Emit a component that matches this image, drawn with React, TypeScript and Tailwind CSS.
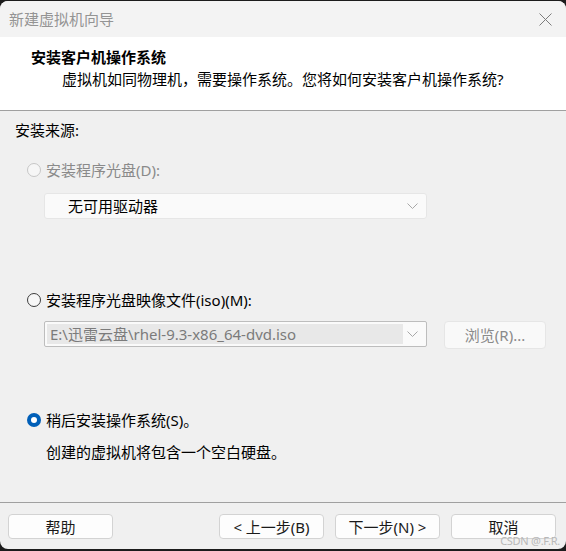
import React from "react";

const font = "font-['Segoe_UI','Noto_Sans','Noto_Sans_CJK_SC',sans-serif]";

function Chevron() {
  return (
    <svg width="11" height="6" viewBox="0 0 11 6" className="shrink-0">
      <path d="M0.5 0.5 L5.5 5.5 L10.5 0.5" fill="none" stroke="#a8a8a8" strokeWidth="1" />
    </svg>
  );
}

function Radio({ state }: { state: "disabled" | "off" | "on" }) {
  if (state === "on") {
    return (
      <span className="w-[14px] h-[14px] rounded-full bg-[#005fb8] flex items-center justify-center shrink-0">
        <span className="w-[6px] h-[6px] rounded-full bg-white" />
      </span>
    );
  }
  if (state === "disabled") {
    return <span className="w-[14px] h-[14px] rounded-full border border-[#c6c6c6] bg-[#f6f6f6] shrink-0" />;
  }
  return <span className="w-[14px] h-[14px] rounded-full border border-[#3c3c3c] bg-[#f7f7f7] shrink-0" />;
}

function Button({ children, className = "" }: { children: React.ReactNode; className?: string }) {
  return (
    <div
      className={`w-[105px] h-[25px] rounded-[4px] border border-[#d3d3d3] bg-[#fdfdfd] flex items-center justify-center text-[15px] text-[#1a1a1a] ${className}`}
    >
      {children}
    </div>
  );
}

export default function App() {
  return (
    <div className={`w-[566px] h-[551px] bg-[#1c1c1c] pt-px pb-[2px] ${font}`}>
      <div className="relative h-full rounded-[8px] overflow-hidden flex flex-col bg-[#f0f0f0] leading-[20px]">
        {/* title bar */}
        <div className="h-[36px] bg-[#f3f3f3] flex items-center justify-between pl-[9px] pr-[14px]">
          <span className="text-[15px] text-[#949494]">新建虚拟机向导</span>
          <svg width="13" height="13" viewBox="0 0 13 13">
            <path d="M0.5 0.5 L12.5 12.5 M12.5 0.5 L0.5 12.5" stroke="#7c7c7c" strokeWidth="1" />
          </svg>
        </div>

        {/* header */}
        <div className="h-[73px] bg-white pt-[10px]">
          <div className="pl-[31px] text-[15px] font-bold text-black">安装客户机操作系统</div>
          <div className="pl-[62px] mt-[2px] text-[15px] text-black">
            虚拟机如同物理机，需要操作系统。您将如何安装客户机操作系统?
          </div>
        </div>
        <div className="h-px bg-[#a0a0a0]" />

        {/* body */}
        <div className="flex-1 flex flex-col pl-[15px] pt-[9px] text-[15px] text-black">
          <div>安装来源:</div>

          <div className="mt-[20px] ml-[12px] flex items-center gap-[5px] text-[#8a8a8a]">
            <Radio state="disabled" />
            <span>安装程序光盘(D):</span>
          </div>
          <div className="mt-[13px] ml-[29px] w-[383px] h-[26px] rounded-[3px] border border-[#e6e6e6] bg-[#fafafa] flex items-center justify-between pl-[23px] pr-[8px]">
            <span>无可用驱动器</span>
            <Chevron />
          </div>

          <div className="mt-[71px] ml-[12px] flex items-center gap-[5px]">
            <Radio state="off" />
            <span>安装程序光盘映像文件(iso)(M):</span>
          </div>
          <div className="mt-[11px] ml-[29px] flex items-start gap-[17px]">
            <div className="w-[383px] h-[26px] rounded-[2px] border border-[#bdbdbd] bg-[#fafafa] flex items-center justify-between p-[2px] pr-[8px]">
              <span className="w-[356px] h-full bg-[#e8e8e8] flex items-center pl-[3px] text-[#7b7b7b]">
                E:\迅雷云盘\rhel-9.3-x86_64-dvd.iso
              </span>
              <Chevron />
            </div>
            <div className="w-[102px] h-[28px] rounded-[4px] border border-[#e6e6e6] bg-[#f9f9f9] flex items-center justify-center text-[#8a8a8a]">
              浏览(R)...
            </div>
          </div>

          <div className="mt-[61px] ml-[12px] flex items-center gap-[5px]">
            <Radio state="on" />
            <span>稍后安装操作系统(S)。</span>
          </div>
          <div className="mt-[12px] ml-[31px]">创建的虚拟机将包含一个空白硬盘。</div>
        </div>

        {/* footer */}
        <div className="h-px bg-[#a0a0a0]" />
        <div className="h-[46px] flex items-start pt-[11px] pl-[8px]">
          <Button>帮助</Button>
          <Button className="ml-[106px]">&lt; 上一步(B)</Button>
          <Button className="ml-[11px]">下一步(N) &gt;</Button>
          <Button className="ml-[11px]">取消</Button>
        </div>

        <span className="absolute right-[6px] bottom-[3px] text-[11px] leading-none text-[#b8b8b8] tracking-tight">
          CSDN @.F.R.
        </span>
      </div>
    </div>
  );
}
